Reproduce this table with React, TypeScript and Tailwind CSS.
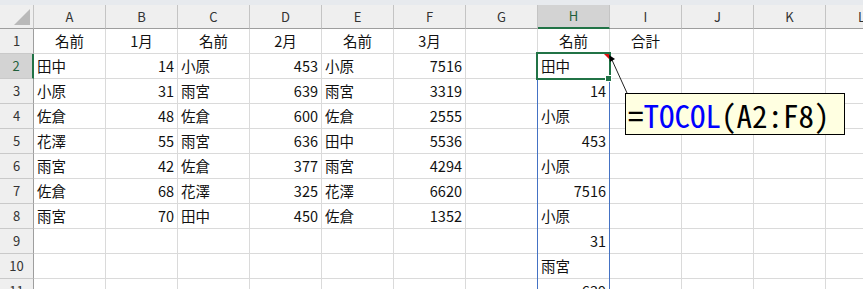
type Cell = string | number | null;

const columns = ["A", "B", "C", "D", "E", "F", "G", "H", "I", "J", "K", "L"];

// 1 row of labels followed by data; column H holds the spilled TOCOL result
const sheet: Cell[][] = [
  ["名前", "1月", "名前", "2月", "名前", "3月", null, "名前", "合計"],
  ["田中", 14, "小原", 453, "小原", 7516, null, "田中"],
  ["小原", 31, "雨宮", 639, "雨宮", 3319, null, 14],
  ["佐倉", 48, "佐倉", 600, "佐倉", 2555, null, "小原"],
  ["花澤", 55, "雨宮", 636, "田中", 5536, null, 453],
  ["雨宮", 42, "佐倉", 377, "雨宮", 4294, null, "小原"],
  ["佐倉", 68, "花澤", 325, "花澤", 6620, null, 7516],
  ["雨宮", 70, "田中", 450, "佐倉", 1352, null, "小原"],
  [null, null, null, null, null, null, null, 31],
  [null, null, null, null, null, null, null, "雨宮"],
  [null, null, null, null, null, null, null, 639],
];

const font = { fontFamily: '"Noto Sans CJK JP", "Noto Sans", sans-serif' };

function ColumnHeader({ label }: { label: string }) {
  const active = label === "H";
  return (
    <div
      className={
        active
          ? "w-[72px] shrink-0 h-full flex items-center justify-center bg-[#d3d3d3] border-r border-r-[#c4c4c4] border-b-2 border-b-[#217346] text-[#1f5f3a]"
          : "w-[72px] shrink-0 h-full flex items-center justify-center bg-[#efefef] border-r border-r-[#c4c4c4] border-b border-b-[#9e9e9e] text-[#333]"
      }
    >
      {label}
    </div>
  );
}

function SheetRow({ index, cells }: { index: number; cells: Cell[] }) {
  const selected = index === 2;
  return (
    <div className="flex h-[25px]">
      <div
        className={
          selected
            ? "w-[34px] shrink-0 flex items-center justify-center bg-[#d3d3d3] border-r-2 border-r-[#217346] border-b border-b-[#c9c9c9] text-[13px] text-[#1f5f3a]"
            : "w-[34px] shrink-0 flex items-center justify-center bg-[#efefef] border-r border-r-[#9e9e9e] border-b border-b-[#c9c9c9] text-[13px] text-[#333]"
        }
      >
        {index}
      </div>
      {columns.map((c, i) => {
        const v = cells[i] ?? null;
        const isNum = typeof v === "number";
        const align =
          index === 1 ? "justify-center" : isNum ? "justify-end" : "justify-start";
        return (
          <div
            key={c}
            className={`w-[72px] shrink-0 flex items-center px-[3px] border-r border-b border-[#dadada] text-[14.5px] text-[#111] ${align}`}
          >
            {v}
          </div>
        );
      })}
    </div>
  );
}

export default function App() {
  return (
    <div
      className="relative w-[863px] h-[289px] overflow-hidden bg-white"
      style={font}
    >
      <div className="h-[5px] bg-[#e7eaee]" />

      {/* column headers */}
      <div className="flex h-[24px] text-[13px]">
        <div className="w-[34px] shrink-0 h-full relative bg-[#efefef] border-r border-r-[#c4c4c4] border-b border-b-[#9e9e9e]">
          <svg className="absolute left-[14px] top-[4px]" width="16" height="16" viewBox="0 0 16 16">
            <polygon points="16,0 16,16 0,16" fill="#b9b9b9" />
          </svg>
        </div>
        {columns.map((c) => (
          <ColumnHeader key={c} label={c} />
        ))}
      </div>

      {sheet.map((cells, i) => (
        <SheetRow key={i} index={i + 1} cells={cells} />
      ))}

      {/* spill range outline for H2# */}
      <div className="absolute left-[537px] top-[53px] w-[73px] h-[240px] border-x border-[#4472c4]" />

      {/* active cell H2 */}
      <div className="absolute left-[536px] top-[52px] w-[75px] h-[28px] border-2 border-[#217346]" />
      <div className="absolute left-[605px] top-[75px] w-[7px] h-[7px] bg-[#217346] border border-white" />
      <svg className="absolute left-[604px] top-[54px]" width="5" height="5" viewBox="0 0 5 5">
        <polygon points="0,0 5,0 5,5" fill="#e01010" />
      </svg>

      {/* comment arrow */}
      <svg className="absolute left-0 top-0" width="863" height="289" viewBox="0 0 863 289">
        <line x1="612" y1="60" x2="627" y2="93" stroke="#222" strokeWidth="1" />
        <polygon points="609,55 615,59 610,62" fill="#000" />
      </svg>

      {/* comment note */}
      <div className="absolute left-[625px] top-[93px] w-[220px] h-[42px] bg-[#ffffe1] border border-black flex items-center pl-[2px]">
        <span
          className="text-[31px] leading-none whitespace-pre"
          style={{ fontFamily: '"Noto Sans Mono CJK JP", "DejaVu Sans Mono", monospace' }}
        >
          <span className="text-black">=</span>
          <span className="text-[#0000ff]">TOCOL</span>
          <span className="text-black">(A2:F8)</span>
        </span>
      </div>
    </div>
  );
}
